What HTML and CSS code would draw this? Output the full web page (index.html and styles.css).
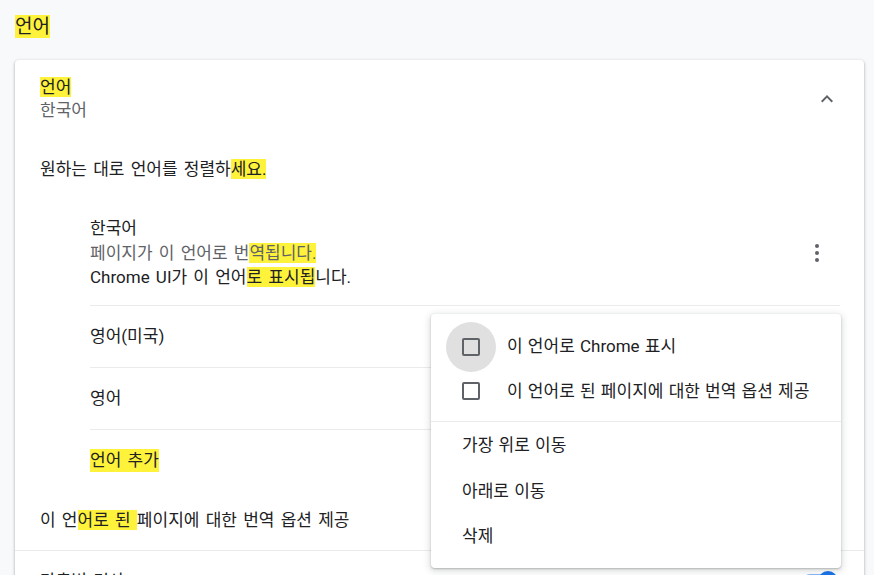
FILE: index.html
```html
<!DOCTYPE html>
<html lang="ko">
<head>
  <meta charset="UTF-8" />
  <title>언어 설정</title>
  <link rel="stylesheet" href="styles.css">
</head>
<body>
  <div class="page">
    <h1 class="page-title"><span class="hl">언어</span></h1>

    <div class="card">
      <!-- Section header -->
      <div class="card-header">
        <div class="header-text">
          <div class="primary"><span class="hl">언어</span></div>
          <div class="secondary">한국어</div>
        </div>
        <svg class="chevron" width="24" height="24" viewBox="0 0 24 24">
          <path d="M7.4 15.4L12 10.8l4.6 4.6L18 14l-6-6-6 6z" fill="#5f6368"/>
        </svg>
      </div>

      <div class="desc">원하는 대로 언어를 정렬하<span class="hl">세요.</span></div>

      <!-- Language list -->
      <div class="lang-list">
        <div class="lang-item first">
          <div class="lang-text">
            <div>한국어</div>
            <div class="secondary">페이지가 이 언어로 번<span class="hl">역됩니다.</span></div>
            <div>Chrome UI가 이 언어<span class="hl">로 표시됩</span>니다.</div>
          </div>
          <svg class="kebab" width="24" height="24" viewBox="0 0 24 24">
            <circle cx="12" cy="5" r="2" fill="#5f6368"/>
            <circle cx="12" cy="12" r="2" fill="#5f6368"/>
            <circle cx="12" cy="19" r="2" fill="#5f6368"/>
          </svg>
        </div>
        <div class="lang-item">영어(미국)</div>
        <div class="lang-item">영어</div>
        <div class="lang-item add"><span class="hl">언어 추가</span></div>
      </div>

      <div class="offer">이 언<span class="hl">어로 된 </span>페이지에 대한 번역 옵션 제공</div>

      <div class="spell-row">
        <div>맞춤법 검사</div>
        <div class="toggle"><span class="knob"></span></div>
      </div>
    </div>

    <!-- Action menu for 영어(미국) -->
    <div class="menu">
      <div class="menu-check">
        <span class="ripple"></span>
        <span class="checkbox"></span>
        <span>이 언어로 Chrome 표시</span>
      </div>
      <div class="menu-check">
        <span class="checkbox"></span>
        <span>이 언어로 된 페이지에 대한 번역 옵션 제공</span>
      </div>
      <div class="menu-sep"></div>
      <div class="menu-item">가장 위로 이동</div>
      <div class="menu-item">아래로 이동</div>
      <div class="menu-item">삭제</div>
    </div>
  </div>
</body>
</html>
```

FILE: styles.css
```css
body {
  margin: 0;
  background: #f8f9fa;
  color: #202124;
  font-family: Roboto, "Noto Sans CJK KR", sans-serif;
  font-size: 17px;
  line-height: 23px;
  word-spacing: 2px;
  overflow: hidden;
}

.hl {
  background: #fff23b;
}

.page {
  padding: 0 10px 0 15px;
  position: relative;
}

.page-title {
  margin: 0;
  padding: 16px 0 22px;
  font-size: 19px;
  font-weight: normal;
  line-height: 22px;
}

.card {
  background: white;
  border-radius: 4px;
  box-shadow: 0 1px 2px rgba(60,64,67,0.3), 0 1px 3px 1px rgba(60,64,67,0.15);
  height: 560px;
}

.card-header {
  display: flex;
  align-items: center;
  justify-content: space-between;
  padding: 16px 25px 0 25px;
}

.secondary {
  color: #5f6368;
}

.desc {
  padding: 36px 25px 0;
}

.lang-list {
  padding: 0 24px 0 75px;
}

.lang-item {
  height: 61px;
  display: flex;
  align-items: center;
  border-top: 1px solid rgba(0,0,0,0.08);
}

.lang-item.first {
  height: auto;
  border-top: none;
  padding: 35px 0 15px;
  justify-content: space-between;
}

.lang-item.first .lang-text {
  line-height: 24.5px;
}

.kebab {
  margin-right: 11px;
}

.offer {
  padding: 18px 25px 18px;
  border-bottom: 1px solid rgba(0,0,0,0.08);
}

.spell-row {
  display: flex;
  justify-content: space-between;
  padding: 19px 27px 0 25px;
}

.toggle {
  position: relative;
  width: 34px;
  height: 14px;
  margin-top: 4px;
  border-radius: 7px;
  background: #8ab4f8;
}

.knob {
  position: absolute;
  right: -1px;
  top: -3px;
  width: 20px;
  height: 20px;
  border-radius: 50%;
  background: #1a73e8;
}

/* popup menu */
.menu {
  position: absolute;
  left: 431px;
  top: 314px;
  width: 410px;
  padding: 10px 0 8px;
  background: white;
  border-radius: 4px;
  word-spacing: 1px;
  box-shadow: 0 2px 6px 2px rgba(60,64,67,0.15), 0 1px 2px rgba(60,64,67,0.3);
}

.menu-check {
  position: relative;
  display: flex;
  align-items: center;
  height: 45px;
  padding-left: 31px;
}

.menu-check + .menu-check {
  height: 44px;
}

.ripple {
  position: absolute;
  left: 15px;
  top: -2px;
  width: 50px;
  height: 50px;
  border-radius: 50%;
  background: #e0e0e0;
}

.checkbox {
  position: relative;
  width: 14px;
  height: 14px;
  border: 2px solid #5f6368;
  border-radius: 2px;
  margin-right: 27px;
}

.menu-sep {
  margin-top: 8px;
  padding-top: 1px;
  border-top: 1px solid rgba(0,0,0,0.08);
}

.menu-item {
  height: 45.5px;
  display: flex;
  align-items: center;
  padding-left: 31px;
}
```
